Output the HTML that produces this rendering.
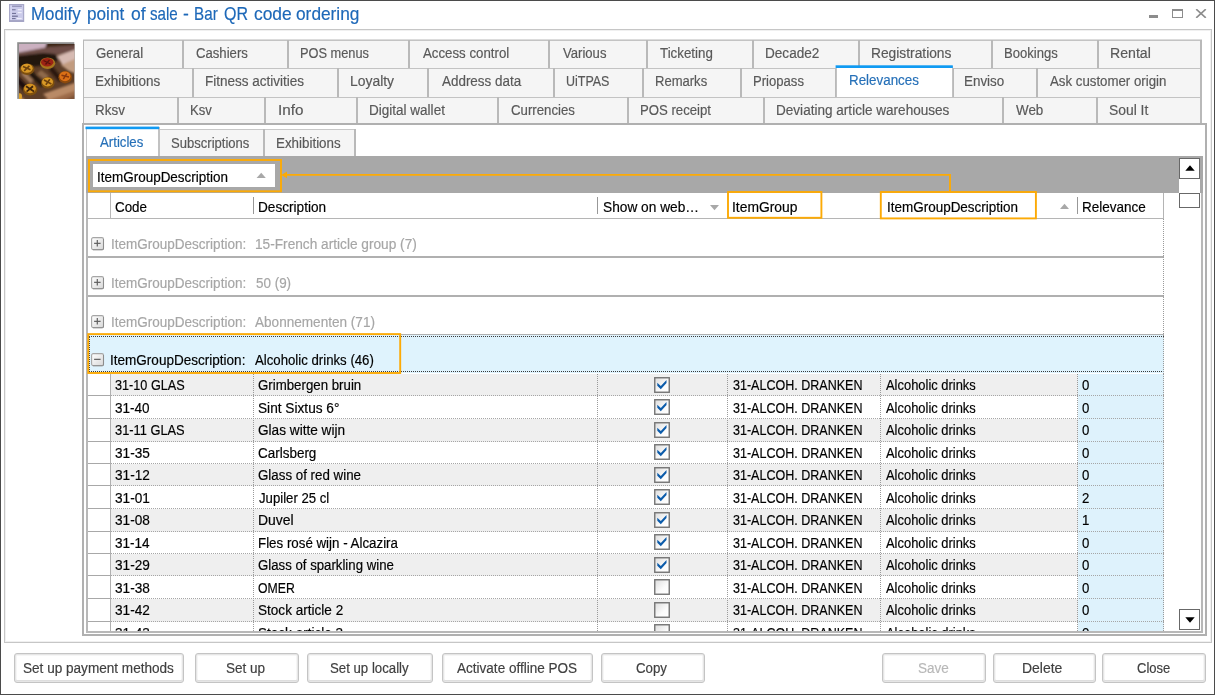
<!DOCTYPE html><html><head><meta charset="utf-8"><title>Modify point of sale - Bar QR code ordering</title><style>
html,body{margin:0;padding:0;background:#fff;}
body{width:1215px;height:695px;position:relative;overflow:hidden;font-family:"Liberation Sans", sans-serif;}
.b{position:absolute;box-sizing:border-box;}
.t{position:absolute;white-space:nowrap;font-family:"Liberation Sans", sans-serif;transform-origin:0 50%;-webkit-text-stroke:0.18px currentColor;}
.tab{background:#f3f3f3;border:1px solid #c6c6c6;}
.btn{background:#fff;border:1px solid #c4c4c4;border-radius:3px;box-shadow:inset 0 0 0 1px #e6e6e6, inset 0 -1px 0 1px #dedede, inset 0 0 0 2px #f6f6f6;}

</style></head><body>
<div class="b " style="left:0px;top:0px;width:1215px;height:695px;border:1px solid #4b4b4b;"></div>
<svg class="b" style="left:9px;top:4px" width="16" height="18" viewBox="0 0 16 18">
<rect x="0.6" y="0.6" width="14" height="16.8" fill="#cbcbea" stroke="#a9a9c9" stroke-width="1.2"/>
<rect x="1.4" y="1.4" width="1.4" height="15.2" fill="#d9d9f3"/>
<rect x="3" y="1.7" width="9.8" height="1.1" fill="#8c8cb0"/>
<rect x="3" y="5.2" width="3.6" height="1.1" fill="#74749a"/><rect x="8.7" y="5" width="4" height="1.3" fill="#eeeefa"/>
<rect x="8.7" y="8" width="4" height="1.2" fill="#eeeefa"/>
<rect x="3" y="8.9" width="4" height="1.1" fill="#74749a"/>
<rect x="3" y="11.6" width="5.8" height="1.2" fill="#6e6e94"/>
<rect x="3" y="14" width="3.6" height="1.1" fill="#74749a"/><rect x="7.7" y="13.9" width="5" height="1.3" fill="#eeeefa"/>
<rect x="0.6" y="16.2" width="14" height="1.2" fill="#a0a0c0"/>
</svg>
<div class="b" style="left:0;top:0;width:0;height:0;">
<span class="t" style="left:31.32px;top:2.29px;font-size:18.5px;line-height:24px;color:#1d68b8;transform:scaleX(0.9124);">Modify</span>
<span class="t" style="left:86.89px;top:2.29px;font-size:18.5px;line-height:24px;color:#1d68b8;transform:scaleX(0.9281);">point</span>
<span class="t" style="left:130.66px;top:2.29px;font-size:18.5px;line-height:24px;color:#1d68b8;transform:scaleX(0.9469);">of</span>
<span class="t" style="left:150.48px;top:2.29px;font-size:18.5px;line-height:24px;color:#1d68b8;transform:scaleX(0.8190);">sale</span>
<span class="t" style="left:183.02px;top:2.29px;font-size:18.5px;line-height:24px;color:#1d68b8;transform:scaleX(0.9446);">-</span>
<span class="t" style="left:194.45px;top:2.29px;font-size:18.5px;line-height:24px;color:#1d68b8;transform:scaleX(0.8233);">Bar</span>
<span class="t" style="left:223.94px;top:2.29px;font-size:18.5px;line-height:24px;color:#1d68b8;transform:scaleX(0.8649);">QR</span>
<span class="t" style="left:253.56px;top:2.29px;font-size:18.5px;line-height:24px;color:#1d68b8;transform:scaleX(0.9401);">code</span>
<span class="t" style="left:295.67px;top:2.29px;font-size:18.5px;line-height:24px;color:#1d68b8;transform:scaleX(0.9347);">ordering</span>
</div>
<div class="b " style="left:1149px;top:15px;width:9px;height:3px;background:#8c8c8c;"></div>
<div class="b " style="left:1172px;top:9px;width:11px;height:9px;border:1px solid #8c8c8c;border-top-width:2px;"></div>
<svg class="b" style="left:1195px;top:9px" width="12" height="9" viewBox="0 0 12 9"><path d="M1.2 0.2 L10.8 8.8 M10.8 0.2 L1.2 8.8" stroke="#8c8c8c" stroke-width="1.7" fill="none"/></svg>
<div class="b " style="left:4px;top:29px;width:1208px;height:614px;border:1px solid #c6c6c6;box-shadow:inset 0 0 0 1px #f0f0f0;"></div>
<svg class="b" style="left:17px;top:42px" width="58" height="57" viewBox="0 0 58 57">
<defs><filter id="bl" x="-10%" y="-10%" width="120%" height="120%"><feGaussianBlur stdDeviation="1.3"/></filter>
<filter id="bs" x="-20%" y="-20%" width="140%" height="140%"><feGaussianBlur stdDeviation="0.55"/></filter>
<clipPath id="ic"><rect x="2" y="2" width="55.3" height="54.9"/></clipPath></defs>
<rect x="0.2" y="0.2" width="57.1" height="56.7" fill="#8e8e8e"/>
<g clip-path="url(#ic)"><g transform="translate(2,2)">
<rect x="-2" y="-2" width="60" height="60" fill="#5e3e28"/>
<g filter="url(#bl)">
<path d="M-3 -3 L30 -3 L26 4 L-3 10 Z" fill="#cbb0c0"/>
<path d="M28 -3 L58 -3 L58 3 L26 6 Z" fill="#3c2618"/>
<path d="M-3 9 L30 3 L58 1 L58 7 L36 11 L-3 14 Z" fill="#6e4e46"/>
<path d="M-3 12 L24 9 L36 10 L40 16 L20 22 L-3 24 Z" fill="#20130a"/>
<path d="M38 12 L58 5 L58 16 L44 22 Z" fill="#d6bab2"/>
<path d="M42 21 L58 14 L58 30 L50 27 Z" fill="#c29c80"/>
<path d="M-3 30 L10 44 L6 48 L-3 38 Z" fill="#1c1009"/>
<path d="M13 27 L26 40 L22 43 L10 31 Z" fill="#23150b"/>
<path d="M33 22 L44 35 L40 38 L30 26 Z" fill="#2a190d"/>
<path d="M2 30 L12 40 L14 36 L6 28 Z" fill="#a27c5e"/>
<path d="M18 30 L26 36 L30 32 L22 26 Z" fill="#8f6a4c"/>
<path d="M20 58 L58 42 L58 58 Z" fill="#9c6a48"/>
<path d="M24 50 L58 38 L58 46 L30 56 Z" fill="#b98a66"/>
<path d="M-3 48 L8 58 L-3 58 Z" fill="#b88a5c"/>
<path d="M40 58 L58 50 L58 58 Z" fill="#7e5238"/>
</g>
<g filter="url(#bs)">
<ellipse cx="28.6" cy="19.2" rx="7.6" ry="5.8" fill="#a8761f"/><ellipse cx="28.2" cy="18.2" rx="6.2" ry="4.2" fill="#9c2412"/>
<ellipse cx="8.2" cy="25.2" rx="7.2" ry="5.8" fill="#7e5010"/><ellipse cx="7.8" cy="24.2" rx="5.8" ry="4.5" fill="#d89828"/>
<ellipse cx="46.2" cy="33.2" rx="6.8" ry="6.2" fill="#8a480c"/><ellipse cx="46" cy="32.3" rx="5.5" ry="4.9" fill="#dc7016"/>
<ellipse cx="28.8" cy="38.8" rx="6.8" ry="5.8" fill="#7e5010"/><ellipse cx="28.5" cy="37.9" rx="5.5" ry="4.5" fill="#da9a28"/>
<ellipse cx="11.2" cy="45.4" rx="7.2" ry="6" fill="#7e5010"/><ellipse cx="11" cy="44.5" rx="5.9" ry="4.7" fill="#d49222"/>
<ellipse cx="0.6" cy="52.4" rx="2.4" ry="3.2" fill="#dca02a"/>
<path d="M24.5 16.5 L31.5 20 M26.5 20.5 L30.5 15.8" stroke="#5a120a" stroke-width="1.3" fill="none"/>
<path d="M4 22.5 L11.5 25.8 M5.2 26.8 L10.4 21.8" stroke="#6e420c" stroke-width="1.6" fill="none"/>
<path d="M42.5 31.3 L50 33 M44.3 35.2 L47.8 29.6" stroke="#8a3808" stroke-width="1.5" fill="none"/>
<path d="M25 36 L32.4 40 M26.8 40.8 L30.8 35.2" stroke="#6e420c" stroke-width="1.6" fill="none"/>
<path d="M7 42.3 L15 47.6 M7.6 47.6 L14 42.2" stroke="#40260a" stroke-width="1.8" fill="none"/>
</g>
</g></g>
</svg>
<div class="b " style="left:83px;top:40px;width:1119px;height:84px;background:#f5f5f5;"></div>
<div class="b " style="left:83px;top:39px;width:1119px;height:1px;background:#dcdcdc;"></div>
<div class="b " style="left:83px;top:40px;width:1119px;height:1px;background:#c3c3c3;"></div>
<div class="b " style="left:83px;top:40px;width:1px;height:28px;background:#b9b9b9;"></div>
<div class="b " style="left:182px;top:40px;width:2px;height:28px;background:#b9b9b9;"></div>
<div class="b " style="left:287px;top:40px;width:2px;height:28px;background:#b9b9b9;"></div>
<div class="b " style="left:408px;top:40px;width:2px;height:28px;background:#b9b9b9;"></div>
<div class="b " style="left:548px;top:40px;width:2px;height:28px;background:#b9b9b9;"></div>
<div class="b " style="left:646px;top:40px;width:2px;height:28px;background:#b9b9b9;"></div>
<div class="b " style="left:752px;top:40px;width:2px;height:28px;background:#b9b9b9;"></div>
<div class="b " style="left:858px;top:40px;width:2px;height:28px;background:#b9b9b9;"></div>
<div class="b " style="left:991px;top:40px;width:2px;height:28px;background:#b9b9b9;"></div>
<div class="b " style="left:1097px;top:40px;width:2px;height:28px;background:#b9b9b9;"></div>
<div class="b " style="left:1200px;top:40px;width:2px;height:28px;background:#b9b9b9;"></div>
<span class="t" style="left:95.53px;top:44.75px;font-size:14px;line-height:16px;color:#595959;transform:scaleX(0.9467);">General</span>
<span class="t" style="left:195.73px;top:44.75px;font-size:14px;line-height:16px;color:#595959;transform:scaleX(0.9385);">Cashiers</span>
<span class="t" style="left:299.65px;top:44.75px;font-size:14px;line-height:16px;color:#595959;transform:scaleX(0.9144);">POS menus</span>
<span class="t" style="left:422.97px;top:44.75px;font-size:14px;line-height:16px;color:#595959;transform:scaleX(0.9470);">Access control</span>
<span class="t" style="left:562.64px;top:44.75px;font-size:14px;line-height:16px;color:#595959;transform:scaleX(0.9354);">Various</span>
<span class="t" style="left:660.30px;top:44.75px;font-size:14px;line-height:16px;color:#595959;transform:scaleX(0.9524);">Ticketing</span>
<span class="t" style="left:765.29px;top:44.75px;font-size:14px;line-height:16px;color:#595959;transform:scaleX(0.9707);">Decade2</span>
<span class="t" style="left:871.27px;top:44.75px;font-size:14px;line-height:16px;color:#595959;transform:scaleX(0.9844);">Registrations</span>
<span class="t" style="left:1003.73px;top:44.75px;font-size:14px;line-height:16px;color:#595959;transform:scaleX(0.9350);">Bookings</span>
<span class="t" style="left:1109.84px;top:44.75px;font-size:14px;line-height:16px;color:#595959;transform:scaleX(1.0082);">Rental</span>
<div class="b " style="left:83px;top:68px;width:1119px;height:1px;background:#c3c3c3;"></div>
<div class="b " style="left:83px;top:68px;width:1px;height:29px;background:#b9b9b9;"></div>
<div class="b " style="left:192px;top:68px;width:2px;height:29px;background:#b9b9b9;"></div>
<div class="b " style="left:337px;top:68px;width:2px;height:29px;background:#b9b9b9;"></div>
<div class="b " style="left:427px;top:68px;width:2px;height:29px;background:#b9b9b9;"></div>
<div class="b " style="left:553px;top:68px;width:2px;height:29px;background:#b9b9b9;"></div>
<div class="b " style="left:642px;top:68px;width:2px;height:29px;background:#b9b9b9;"></div>
<div class="b " style="left:740px;top:68px;width:2px;height:29px;background:#b9b9b9;"></div>
<div class="b " style="left:835px;top:68px;width:2px;height:29px;background:#b9b9b9;"></div>
<div class="b " style="left:952px;top:68px;width:2px;height:29px;background:#b9b9b9;"></div>
<div class="b " style="left:1036px;top:68px;width:2px;height:29px;background:#b9b9b9;"></div>
<div class="b " style="left:1200px;top:68px;width:2px;height:29px;background:#b9b9b9;"></div>
<span class="t" style="left:95.09px;top:73.45px;font-size:14px;line-height:16px;color:#595959;transform:scaleX(0.9629);">Exhibitions</span>
<span class="t" style="left:205.29px;top:73.45px;font-size:14px;line-height:16px;color:#595959;transform:scaleX(0.9649);">Fitness activities</span>
<span class="t" style="left:350.06px;top:73.45px;font-size:14px;line-height:16px;color:#595959;transform:scaleX(0.9935);">Loyalty</span>
<span class="t" style="left:441.67px;top:73.45px;font-size:14px;line-height:16px;color:#595959;transform:scaleX(0.9592);">Address data</span>
<span class="t" style="left:566.44px;top:73.45px;font-size:14px;line-height:16px;color:#595959;transform:scaleX(0.8910);">UiTPAS</span>
<span class="t" style="left:655.13px;top:73.45px;font-size:14px;line-height:16px;color:#595959;transform:scaleX(0.9310);">Remarks</span>
<span class="t" style="left:752.83px;top:73.45px;font-size:14px;line-height:16px;color:#595959;transform:scaleX(0.9354);">Priopass</span>
<span class="t" style="left:963.80px;top:73.45px;font-size:14px;line-height:16px;color:#595959;transform:scaleX(0.9582);">Enviso</span>
<span class="t" style="left:1050.37px;top:73.45px;font-size:14px;line-height:16px;color:#595959;transform:scaleX(0.9468);">Ask customer origin</span>
<div class="b " style="left:83px;top:97px;width:1119px;height:1px;background:#c3c3c3;"></div>
<div class="b " style="left:83px;top:97px;width:1px;height:27px;background:#b9b9b9;"></div>
<div class="b " style="left:177px;top:97px;width:2px;height:27px;background:#b9b9b9;"></div>
<div class="b " style="left:264px;top:97px;width:2px;height:27px;background:#b9b9b9;"></div>
<div class="b " style="left:356px;top:97px;width:2px;height:27px;background:#b9b9b9;"></div>
<div class="b " style="left:497px;top:97px;width:2px;height:27px;background:#b9b9b9;"></div>
<div class="b " style="left:627px;top:97px;width:2px;height:27px;background:#b9b9b9;"></div>
<div class="b " style="left:763px;top:97px;width:2px;height:27px;background:#b9b9b9;"></div>
<div class="b " style="left:1002px;top:97px;width:2px;height:27px;background:#b9b9b9;"></div>
<div class="b " style="left:1096px;top:97px;width:2px;height:27px;background:#b9b9b9;"></div>
<div class="b " style="left:1200px;top:97px;width:2px;height:27px;background:#b9b9b9;"></div>
<span class="t" style="left:95.10px;top:102.15px;font-size:14px;line-height:16px;color:#595959;transform:scaleX(0.9594);">Rksv</span>
<span class="t" style="left:190.43px;top:102.15px;font-size:14px;line-height:16px;color:#595959;transform:scaleX(0.9349);">Ksv</span>
<span class="t" style="left:277.59px;top:102.15px;font-size:14px;line-height:16px;color:#595959;transform:scaleX(1.0898);">Info</span>
<span class="t" style="left:368.89px;top:102.15px;font-size:14px;line-height:16px;color:#595959;transform:scaleX(0.9659);">Digital wallet</span>
<span class="t" style="left:510.93px;top:102.15px;font-size:14px;line-height:16px;color:#595959;transform:scaleX(0.9447);">Currencies</span>
<span class="t" style="left:640.12px;top:102.15px;font-size:14px;line-height:16px;color:#595959;transform:scaleX(0.9404);">POS receipt</span>
<span class="t" style="left:776.49px;top:102.15px;font-size:14px;line-height:16px;color:#595959;transform:scaleX(0.9688);">Deviating article warehouses</span>
<span class="t" style="left:1016.14px;top:102.15px;font-size:14px;line-height:16px;color:#595959;transform:scaleX(0.9575);">Web</span>
<span class="t" style="left:1109.17px;top:102.15px;font-size:14px;line-height:16px;color:#595959;transform:scaleX(0.9910);">Soul It</span>
<div class="b " style="left:836px;top:66px;width:117px;height:31px;background:#fff;border-left:1px solid #c2c2c2;border-right:1px solid #c2c2c2;"></div>
<svg class="b" style="left:830px;top:60px" width="130" height="12" viewBox="0 0 130 12"><rect x="5.6" y="5.3" width="117.2" height="2.7" fill="#109af2"/></svg>
<span class="t" style="left:848.80px;top:72.45px;font-size:14px;line-height:16px;color:#2670b8;transform:scaleX(0.9553);">Relevances</span>
<div class="b " style="left:82px;top:123px;width:1125px;height:513px;border:2px solid #b0b0b0;background:#fff;"></div>
<div class="b " style="left:159px;top:129px;width:197px;height:28px;background:#f5f5f5;border-top:1px solid #c8c8c8;"></div>
<div class="b " style="left:263px;top:129px;width:2px;height:28px;background:#b9b9b9;"></div>
<div class="b " style="left:354px;top:129px;width:2px;height:28px;background:#b9b9b9;"></div>
<span class="t" style="left:171.21px;top:134.65px;font-size:14px;line-height:16px;color:#595959;transform:scaleX(0.9325);">Subscriptions</span>
<span class="t" style="left:276.40px;top:134.65px;font-size:14px;line-height:16px;color:#595959;transform:scaleX(0.9554);">Exhibitions</span>
<div class="b " style="left:86px;top:127px;width:74px;height:30px;background:#fff;border-left:1px solid #c8c8c8;border-right:2px solid #c2c2c2;"></div>
<svg class="b" style="left:80px;top:120px" width="90" height="12" viewBox="0 0 90 12"><rect x="5.5" y="6.6" width="73.6" height="2.6" fill="#109af2"/></svg>
<span class="t" style="left:100.27px;top:133.95px;font-size:14px;line-height:16px;color:#2670b8;transform:scaleX(0.9435);">Articles</span>
<div class="b " style="left:86px;top:156px;width:1117px;height:477px;border:2px solid #b8b8b8;border-top:none;"></div>
<div class="b " style="left:86px;top:156px;width:1117px;height:36.5px;background:#a8a8a8;"></div>
<div class="b " style="left:92.5px;top:164px;width:182px;height:23px;background:#fff;"></div>
<span class="t" style="left:97.46px;top:168.75px;font-size:14px;line-height:16px;color:#000;transform:scaleX(0.9622);">ItemGroupDescription</span>
<svg class="b" style="left:256px;top:172px" width="11" height="7" viewBox="0 0 11 7"><path d="M0.6 5.9 L5.2 0.7 L9.8 5.9 Z" fill="#a8a8a8"/></svg>
<div class="b " style="left:88px;top:192.5px;width:1076px;height:26px;background:#fff;"></div>
<div class="b " style="left:88px;top:218px;width:1076px;height:1px;background:#b5b5b5;"></div>
<div class="b " style="left:110px;top:192.5px;width:1px;height:26px;background:#b8b8b8;"></div>
<div class="b " style="left:253px;top:197px;width:1px;height:17px;background:#989898;"></div>
<div class="b " style="left:597px;top:197px;width:1px;height:17px;background:#989898;"></div>
<div class="b " style="left:1077px;top:197px;width:1px;height:17px;background:#989898;"></div>
<span class="t" style="left:115.42px;top:198.75px;font-size:14px;line-height:16px;color:#000;transform:scaleX(0.9553);">Code</span>
<span class="t" style="left:258.38px;top:198.75px;font-size:14px;line-height:16px;color:#000;transform:scaleX(0.9725);">Description</span>
<span class="t" style="left:603.08px;top:198.75px;font-size:14px;line-height:16px;color:#000;transform:scaleX(0.9789);">Show on web…</span>
<span class="t" style="left:732.12px;top:198.75px;font-size:14px;line-height:16px;color:#000;transform:scaleX(0.9898);">ItemGroup</span>
<span class="t" style="left:886.66px;top:198.75px;font-size:14px;line-height:16px;color:#000;transform:scaleX(0.9622);">ItemGroupDescription</span>
<span class="t" style="left:1082.49px;top:198.75px;font-size:14px;line-height:16px;color:#000;transform:scaleX(0.9646);">Relevance</span>
<svg class="b" style="left:709px;top:204px" width="11" height="7" viewBox="0 0 11 7"><path d="M1 1 L10 1 L5.5 6.2 Z" fill="#a8a8a8"/></svg>
<svg class="b" style="left:1059px;top:203px" width="11" height="7" viewBox="0 0 11 7"><path d="M1 6 L5.5 0.8 L10 6 Z" fill="#a8a8a8"/></svg>
<svg width="0" height="0" style="position:absolute"><defs><linearGradient id="pg" x1="0" y1="0" x2="1" y2="1"><stop offset="0" stop-color="#ffffff"/><stop offset="1" stop-color="#d8d8d8"/></linearGradient></defs></svg>
<div class="b " style="left:88px;top:256px;width:1076px;height:2px;background:#b0b0b0;"></div>
<svg class="b" style="left:91px;top:237.1px" width="14" height="14" viewBox="0 0 14 14"><rect x="0.6" y="0.6" width="11.9" height="12.1" rx="1.6" fill="url(#pg)" stroke="#a6a6a6" stroke-width="1.1"/><path d="M12.5 2 V12 Q12.5 12.7 11.8 12.7 H2" fill="none" stroke="#8c8c8c" stroke-width="1"/><path d="M3.1 6.35 H9.6" stroke="#606060" stroke-width="1.2"/><path d="M6.3 3.1 V9.6" stroke="#606060" stroke-width="1.2"/></svg>
<span class="t" style="left:110.65px;top:236.15px;font-size:14px;line-height:16px;color:#a6a6a6;transform:scaleX(0.9652);">ItemGroupDescription:</span>
<span class="t" style="left:254.76px;top:236.15px;font-size:14px;line-height:16px;color:#a6a6a6;transform:scaleX(0.9762);">15-French article group (7)</span>
<div class="b " style="left:88px;top:295px;width:1076px;height:2px;background:#b0b0b0;"></div>
<svg class="b" style="left:91px;top:275.8px" width="14" height="14" viewBox="0 0 14 14"><rect x="0.6" y="0.6" width="11.9" height="12.1" rx="1.6" fill="url(#pg)" stroke="#a6a6a6" stroke-width="1.1"/><path d="M12.5 2 V12 Q12.5 12.7 11.8 12.7 H2" fill="none" stroke="#8c8c8c" stroke-width="1"/><path d="M3.1 6.35 H9.6" stroke="#606060" stroke-width="1.2"/><path d="M6.3 3.1 V9.6" stroke="#606060" stroke-width="1.2"/></svg>
<span class="t" style="left:110.65px;top:274.85px;font-size:14px;line-height:16px;color:#a6a6a6;transform:scaleX(0.9652);">ItemGroupDescription:</span>
<span class="t" style="left:256.36px;top:274.85px;font-size:14px;line-height:16px;color:#a6a6a6;transform:scaleX(0.9589);">50 (9)</span>
<div class="b " style="left:88px;top:334px;width:1076px;height:2px;background:#b0b0b0;"></div>
<svg class="b" style="left:91px;top:314.5px" width="14" height="14" viewBox="0 0 14 14"><rect x="0.6" y="0.6" width="11.9" height="12.1" rx="1.6" fill="url(#pg)" stroke="#a6a6a6" stroke-width="1.1"/><path d="M12.5 2 V12 Q12.5 12.7 11.8 12.7 H2" fill="none" stroke="#8c8c8c" stroke-width="1"/><path d="M3.1 6.35 H9.6" stroke="#606060" stroke-width="1.2"/><path d="M6.3 3.1 V9.6" stroke="#606060" stroke-width="1.2"/></svg>
<span class="t" style="left:110.65px;top:313.55px;font-size:14px;line-height:16px;color:#a6a6a6;transform:scaleX(0.9652);">ItemGroupDescription:</span>
<span class="t" style="left:255.17px;top:313.55px;font-size:14px;line-height:16px;color:#a6a6a6;transform:scaleX(0.9694);">Abonnementen (71)</span>
<div class="b " style="left:88px;top:335px;width:1076px;height:38px;background:#dff3fd;"></div>
<div class="b " style="left:89px;top:336px;width:1075px;height:36px;border:1px dotted #3a3a3a;"></div>
<svg class="b" style="left:91px;top:353.3px" width="14" height="14" viewBox="0 0 14 14"><rect x="0.6" y="0.6" width="11.9" height="12.1" rx="1.6" fill="url(#pg)" stroke="#a6a6a6" stroke-width="1.1"/><path d="M12.5 2 V12 Q12.5 12.7 11.8 12.7 H2" fill="none" stroke="#8c8c8c" stroke-width="1"/><path d="M3.1 6.35 H9.6" stroke="#606060" stroke-width="1.2"/></svg>
<span class="t" style="left:110.45px;top:352.35px;font-size:14px;line-height:16px;color:#000;transform:scaleX(0.9667);">ItemGroupDescription:</span>
<span class="t" style="left:254.97px;top:352.35px;font-size:14px;line-height:16px;color:#000;transform:scaleX(0.9429);">Alcoholic drinks (46)</span>
<div class="b" style="left:88px;top:374px;width:1113px;height:257px;overflow:hidden;">
<svg width="0" height="0" style="position:absolute"><defs><linearGradient id="cg" x1="0" y1="0" x2="1" y2="1"><stop offset="0" stop-color="#dcdcdc"/><stop offset="0.6" stop-color="#fbfbfb"/><stop offset="1" stop-color="#fff"/></linearGradient></defs></svg>
<div class="b " style="left:22px;top:0px;width:968px;height:22px;background:#efefef;"></div>
<div class="b " style="left:990px;top:0px;width:86px;height:22px;background:#def2fc;"></div>
<div class="b " style="left:0px;top:21px;width:22px;height:1px;background:#a8a8a8;"></div>
<div class="b " style="left:22px;top:21px;width:1054px;height:1px;border-top:1px dotted #a6a6a6;"></div>
<span class="t" style="left:27.12px;top:3.05px;font-size:14px;line-height:16px;color:#000;transform:scaleX(0.9042);">31-10 GLAS</span>
<span class="t" style="left:170.13px;top:3.05px;font-size:14px;line-height:16px;color:#000;transform:scaleX(0.9476);">Grimbergen bruin</span>
<svg class="b" style="left:566.3px;top:3px" width="16" height="16" viewBox="0 0 16 16"><rect x="0.75" y="0.75" width="14.5" height="14.5" fill="url(#cg)" stroke="#747474" stroke-width="1.4"/><path d="M3.3 5.7 L3.3 8.8 L6.8 12.3 L12.5 5.9 L12.5 2.9 L6.8 9.0 Z" fill="#0c5cab"/></svg>
<span class="t" style="left:645.22px;top:3.05px;font-size:14px;line-height:16px;color:#000;transform:scaleX(0.8949);">31-ALCOH. DRANKEN</span>
<span class="t" style="left:798.47px;top:3.05px;font-size:14px;line-height:16px;color:#000;transform:scaleX(0.9232);">Alcoholic drinks</span>
<span class="t" style="left:994.48px;top:3.05px;font-size:14px;line-height:16px;color:#000;transform:scaleX(0.9446);">0</span>
<div class="b " style="left:22px;top:22px;width:968px;height:23px;background:#fff;"></div>
<div class="b " style="left:990px;top:22px;width:86px;height:23px;background:#def2fc;"></div>
<div class="b " style="left:0px;top:44px;width:22px;height:1px;background:#a8a8a8;"></div>
<div class="b " style="left:22px;top:44px;width:1054px;height:1px;border-top:1px dotted #a6a6a6;"></div>
<span class="t" style="left:27.09px;top:25.55px;font-size:14px;line-height:16px;color:#000;transform:scaleX(0.9647);">31-40</span>
<span class="t" style="left:170.18px;top:25.55px;font-size:14px;line-height:16px;color:#000;transform:scaleX(0.9764);">Sint Sixtus 6°</span>
<svg class="b" style="left:566.3px;top:25px" width="16" height="16" viewBox="0 0 16 16"><rect x="0.75" y="0.75" width="14.5" height="14.5" fill="url(#cg)" stroke="#747474" stroke-width="1.4"/><path d="M3.3 5.7 L3.3 8.8 L6.8 12.3 L12.5 5.9 L12.5 2.9 L6.8 9.0 Z" fill="#0c5cab"/></svg>
<span class="t" style="left:645.22px;top:25.55px;font-size:14px;line-height:16px;color:#000;transform:scaleX(0.8949);">31-ALCOH. DRANKEN</span>
<span class="t" style="left:798.47px;top:25.55px;font-size:14px;line-height:16px;color:#000;transform:scaleX(0.9232);">Alcoholic drinks</span>
<span class="t" style="left:994.48px;top:25.55px;font-size:14px;line-height:16px;color:#000;transform:scaleX(0.9446);">0</span>
<div class="b " style="left:22px;top:45px;width:968px;height:23px;background:#efefef;"></div>
<div class="b " style="left:990px;top:45px;width:86px;height:23px;background:#def2fc;"></div>
<div class="b " style="left:0px;top:67px;width:22px;height:1px;background:#a8a8a8;"></div>
<div class="b " style="left:22px;top:67px;width:1054px;height:1px;border-top:1px dotted #a6a6a6;"></div>
<span class="t" style="left:27.11px;top:48.05px;font-size:14px;line-height:16px;color:#000;transform:scaleX(0.9167);">31-11 GLAS</span>
<span class="t" style="left:170.11px;top:48.05px;font-size:14px;line-height:16px;color:#000;transform:scaleX(0.9732);">Glas witte wijn</span>
<svg class="b" style="left:566.3px;top:48px" width="16" height="16" viewBox="0 0 16 16"><rect x="0.75" y="0.75" width="14.5" height="14.5" fill="url(#cg)" stroke="#747474" stroke-width="1.4"/><path d="M3.3 5.7 L3.3 8.8 L6.8 12.3 L12.5 5.9 L12.5 2.9 L6.8 9.0 Z" fill="#0c5cab"/></svg>
<span class="t" style="left:645.22px;top:48.05px;font-size:14px;line-height:16px;color:#000;transform:scaleX(0.8949);">31-ALCOH. DRANKEN</span>
<span class="t" style="left:798.47px;top:48.05px;font-size:14px;line-height:16px;color:#000;transform:scaleX(0.9232);">Alcoholic drinks</span>
<span class="t" style="left:994.48px;top:48.05px;font-size:14px;line-height:16px;color:#000;transform:scaleX(0.9446);">0</span>
<div class="b " style="left:22px;top:68px;width:968px;height:22px;background:#fff;"></div>
<div class="b " style="left:990px;top:68px;width:86px;height:22px;background:#def2fc;"></div>
<div class="b " style="left:0px;top:89px;width:22px;height:1px;background:#a8a8a8;"></div>
<div class="b " style="left:22px;top:89px;width:1054px;height:1px;border-top:1px dotted #a6a6a6;"></div>
<span class="t" style="left:27.08px;top:70.55px;font-size:14px;line-height:16px;color:#000;transform:scaleX(0.9716);">31-35</span>
<span class="t" style="left:170.12px;top:70.55px;font-size:14px;line-height:16px;color:#000;transform:scaleX(0.9615);">Carlsberg</span>
<svg class="b" style="left:566.3px;top:70px" width="16" height="16" viewBox="0 0 16 16"><rect x="0.75" y="0.75" width="14.5" height="14.5" fill="url(#cg)" stroke="#747474" stroke-width="1.4"/><path d="M3.3 5.7 L3.3 8.8 L6.8 12.3 L12.5 5.9 L12.5 2.9 L6.8 9.0 Z" fill="#0c5cab"/></svg>
<span class="t" style="left:645.22px;top:70.55px;font-size:14px;line-height:16px;color:#000;transform:scaleX(0.8949);">31-ALCOH. DRANKEN</span>
<span class="t" style="left:798.47px;top:70.55px;font-size:14px;line-height:16px;color:#000;transform:scaleX(0.9232);">Alcoholic drinks</span>
<span class="t" style="left:994.48px;top:70.55px;font-size:14px;line-height:16px;color:#000;transform:scaleX(0.9446);">0</span>
<div class="b " style="left:22px;top:90px;width:968px;height:22px;background:#efefef;"></div>
<div class="b " style="left:990px;top:90px;width:86px;height:22px;background:#def2fc;"></div>
<div class="b " style="left:0px;top:111px;width:22px;height:1px;background:#a8a8a8;"></div>
<div class="b " style="left:22px;top:111px;width:1054px;height:1px;border-top:1px dotted #a6a6a6;"></div>
<span class="t" style="left:27.08px;top:93.05px;font-size:14px;line-height:16px;color:#000;transform:scaleX(0.9749);">31-12</span>
<span class="t" style="left:170.13px;top:93.05px;font-size:14px;line-height:16px;color:#000;transform:scaleX(0.9520);">Glass of red wine</span>
<svg class="b" style="left:566.3px;top:93px" width="16" height="16" viewBox="0 0 16 16"><rect x="0.75" y="0.75" width="14.5" height="14.5" fill="url(#cg)" stroke="#747474" stroke-width="1.4"/><path d="M3.3 5.7 L3.3 8.8 L6.8 12.3 L12.5 5.9 L12.5 2.9 L6.8 9.0 Z" fill="#0c5cab"/></svg>
<span class="t" style="left:645.22px;top:93.05px;font-size:14px;line-height:16px;color:#000;transform:scaleX(0.8949);">31-ALCOH. DRANKEN</span>
<span class="t" style="left:798.47px;top:93.05px;font-size:14px;line-height:16px;color:#000;transform:scaleX(0.9232);">Alcoholic drinks</span>
<span class="t" style="left:994.48px;top:93.05px;font-size:14px;line-height:16px;color:#000;transform:scaleX(0.9446);">0</span>
<div class="b " style="left:22px;top:112px;width:968px;height:23px;background:#fff;"></div>
<div class="b " style="left:990px;top:112px;width:86px;height:23px;background:#def2fc;"></div>
<div class="b " style="left:0px;top:134px;width:22px;height:1px;background:#a8a8a8;"></div>
<div class="b " style="left:22px;top:134px;width:1054px;height:1px;border-top:1px dotted #a6a6a6;"></div>
<span class="t" style="left:27.08px;top:115.55px;font-size:14px;line-height:16px;color:#000;transform:scaleX(0.9743);">31-01</span>
<span class="t" style="left:170.59px;top:115.55px;font-size:14px;line-height:16px;color:#000;transform:scaleX(0.9409);">Jupiler 25 cl</span>
<svg class="b" style="left:566.3px;top:115px" width="16" height="16" viewBox="0 0 16 16"><rect x="0.75" y="0.75" width="14.5" height="14.5" fill="url(#cg)" stroke="#747474" stroke-width="1.4"/><path d="M3.3 5.7 L3.3 8.8 L6.8 12.3 L12.5 5.9 L12.5 2.9 L6.8 9.0 Z" fill="#0c5cab"/></svg>
<span class="t" style="left:645.22px;top:115.55px;font-size:14px;line-height:16px;color:#000;transform:scaleX(0.8949);">31-ALCOH. DRANKEN</span>
<span class="t" style="left:798.47px;top:115.55px;font-size:14px;line-height:16px;color:#000;transform:scaleX(0.9232);">Alcoholic drinks</span>
<span class="t" style="left:994.33px;top:115.55px;font-size:14px;line-height:16px;color:#000;transform:scaleX(0.9446);">2</span>
<div class="b " style="left:22px;top:135px;width:968px;height:23px;background:#efefef;"></div>
<div class="b " style="left:990px;top:135px;width:86px;height:23px;background:#def2fc;"></div>
<div class="b " style="left:0px;top:157px;width:22px;height:1px;background:#a8a8a8;"></div>
<div class="b " style="left:22px;top:157px;width:1054px;height:1px;border-top:1px dotted #a6a6a6;"></div>
<span class="t" style="left:27.08px;top:138.05px;font-size:14px;line-height:16px;color:#000;transform:scaleX(0.9722);">31-08</span>
<span class="t" style="left:169.66px;top:138.05px;font-size:14px;line-height:16px;color:#000;transform:scaleX(0.9968);">Duvel</span>
<svg class="b" style="left:566.3px;top:138px" width="16" height="16" viewBox="0 0 16 16"><rect x="0.75" y="0.75" width="14.5" height="14.5" fill="url(#cg)" stroke="#747474" stroke-width="1.4"/><path d="M3.3 5.7 L3.3 8.8 L6.8 12.3 L12.5 5.9 L12.5 2.9 L6.8 9.0 Z" fill="#0c5cab"/></svg>
<span class="t" style="left:645.22px;top:138.05px;font-size:14px;line-height:16px;color:#000;transform:scaleX(0.8949);">31-ALCOH. DRANKEN</span>
<span class="t" style="left:798.47px;top:138.05px;font-size:14px;line-height:16px;color:#000;transform:scaleX(0.9232);">Alcoholic drinks</span>
<span class="t" style="left:993.99px;top:138.05px;font-size:14px;line-height:16px;color:#000;transform:scaleX(0.9446);">1</span>
<div class="b " style="left:22px;top:158px;width:968px;height:22px;background:#fff;"></div>
<div class="b " style="left:990px;top:158px;width:86px;height:22px;background:#def2fc;"></div>
<div class="b " style="left:0px;top:179px;width:22px;height:1px;background:#a8a8a8;"></div>
<div class="b " style="left:22px;top:179px;width:1054px;height:1px;border-top:1px dotted #a6a6a6;"></div>
<span class="t" style="left:27.08px;top:160.55px;font-size:14px;line-height:16px;color:#000;transform:scaleX(0.9666);">31-14</span>
<span class="t" style="left:169.71px;top:160.55px;font-size:14px;line-height:16px;color:#000;transform:scaleX(0.9518);">Fles rosé wijn - Alcazira</span>
<svg class="b" style="left:566.3px;top:160px" width="16" height="16" viewBox="0 0 16 16"><rect x="0.75" y="0.75" width="14.5" height="14.5" fill="url(#cg)" stroke="#747474" stroke-width="1.4"/><path d="M3.3 5.7 L3.3 8.8 L6.8 12.3 L12.5 5.9 L12.5 2.9 L6.8 9.0 Z" fill="#0c5cab"/></svg>
<span class="t" style="left:645.22px;top:160.55px;font-size:14px;line-height:16px;color:#000;transform:scaleX(0.8949);">31-ALCOH. DRANKEN</span>
<span class="t" style="left:798.47px;top:160.55px;font-size:14px;line-height:16px;color:#000;transform:scaleX(0.9232);">Alcoholic drinks</span>
<span class="t" style="left:994.48px;top:160.55px;font-size:14px;line-height:16px;color:#000;transform:scaleX(0.9446);">0</span>
<div class="b " style="left:22px;top:180px;width:968px;height:22px;background:#efefef;"></div>
<div class="b " style="left:990px;top:180px;width:86px;height:22px;background:#def2fc;"></div>
<div class="b " style="left:0px;top:201px;width:22px;height:1px;background:#a8a8a8;"></div>
<div class="b " style="left:22px;top:201px;width:1054px;height:1px;border-top:1px dotted #a6a6a6;"></div>
<span class="t" style="left:27.08px;top:183.05px;font-size:14px;line-height:16px;color:#000;transform:scaleX(0.9737);">31-29</span>
<span class="t" style="left:170.14px;top:183.05px;font-size:14px;line-height:16px;color:#000;transform:scaleX(0.9437);">Glass of sparkling wine</span>
<svg class="b" style="left:566.3px;top:183px" width="16" height="16" viewBox="0 0 16 16"><rect x="0.75" y="0.75" width="14.5" height="14.5" fill="url(#cg)" stroke="#747474" stroke-width="1.4"/><path d="M3.3 5.7 L3.3 8.8 L6.8 12.3 L12.5 5.9 L12.5 2.9 L6.8 9.0 Z" fill="#0c5cab"/></svg>
<span class="t" style="left:645.22px;top:183.05px;font-size:14px;line-height:16px;color:#000;transform:scaleX(0.8949);">31-ALCOH. DRANKEN</span>
<span class="t" style="left:798.47px;top:183.05px;font-size:14px;line-height:16px;color:#000;transform:scaleX(0.9232);">Alcoholic drinks</span>
<span class="t" style="left:994.48px;top:183.05px;font-size:14px;line-height:16px;color:#000;transform:scaleX(0.9446);">0</span>
<div class="b " style="left:22px;top:202px;width:968px;height:23px;background:#fff;"></div>
<div class="b " style="left:990px;top:202px;width:86px;height:23px;background:#def2fc;"></div>
<div class="b " style="left:0px;top:224px;width:22px;height:1px;background:#a8a8a8;"></div>
<div class="b " style="left:22px;top:224px;width:1054px;height:1px;border-top:1px dotted #a6a6a6;"></div>
<span class="t" style="left:27.08px;top:205.55px;font-size:14px;line-height:16px;color:#000;transform:scaleX(0.9722);">31-38</span>
<span class="t" style="left:170.22px;top:205.55px;font-size:14px;line-height:16px;color:#000;transform:scaleX(0.8750);">OMER</span>
<svg class="b" style="left:566.3px;top:205px" width="16" height="16" viewBox="0 0 16 16"><rect x="0.75" y="0.75" width="14.5" height="14.5" fill="url(#cg)" stroke="#747474" stroke-width="1.4"/></svg>
<span class="t" style="left:645.22px;top:205.55px;font-size:14px;line-height:16px;color:#000;transform:scaleX(0.8949);">31-ALCOH. DRANKEN</span>
<span class="t" style="left:798.47px;top:205.55px;font-size:14px;line-height:16px;color:#000;transform:scaleX(0.9232);">Alcoholic drinks</span>
<span class="t" style="left:994.48px;top:205.55px;font-size:14px;line-height:16px;color:#000;transform:scaleX(0.9446);">0</span>
<div class="b " style="left:22px;top:225px;width:968px;height:23px;background:#efefef;"></div>
<div class="b " style="left:990px;top:225px;width:86px;height:23px;background:#def2fc;"></div>
<div class="b " style="left:0px;top:247px;width:22px;height:1px;background:#a8a8a8;"></div>
<div class="b " style="left:22px;top:247px;width:1054px;height:1px;border-top:1px dotted #a6a6a6;"></div>
<span class="t" style="left:27.08px;top:228.05px;font-size:14px;line-height:16px;color:#000;transform:scaleX(0.9749);">31-42</span>
<span class="t" style="left:170.18px;top:228.05px;font-size:14px;line-height:16px;color:#000;transform:scaleX(0.9690);">Stock article 2</span>
<svg class="b" style="left:566.3px;top:228px" width="16" height="16" viewBox="0 0 16 16"><rect x="0.75" y="0.75" width="14.5" height="14.5" fill="url(#cg)" stroke="#747474" stroke-width="1.4"/></svg>
<span class="t" style="left:645.22px;top:228.05px;font-size:14px;line-height:16px;color:#000;transform:scaleX(0.8949);">31-ALCOH. DRANKEN</span>
<span class="t" style="left:798.47px;top:228.05px;font-size:14px;line-height:16px;color:#000;transform:scaleX(0.9232);">Alcoholic drinks</span>
<span class="t" style="left:994.48px;top:228.05px;font-size:14px;line-height:16px;color:#000;transform:scaleX(0.9446);">0</span>
<div class="b " style="left:22px;top:248px;width:968px;height:22px;background:#fff;"></div>
<div class="b " style="left:990px;top:248px;width:86px;height:22px;background:#def2fc;"></div>
<div class="b " style="left:0px;top:269px;width:22px;height:1px;background:#a8a8a8;"></div>
<div class="b " style="left:22px;top:269px;width:1054px;height:1px;border-top:1px dotted #a6a6a6;"></div>
<span class="t" style="left:27.08px;top:250.55px;font-size:14px;line-height:16px;color:#000;transform:scaleX(0.9724);">31-43</span>
<span class="t" style="left:170.18px;top:250.55px;font-size:14px;line-height:16px;color:#000;transform:scaleX(0.9680);">Stock article 3</span>
<svg class="b" style="left:566.3px;top:250px" width="16" height="16" viewBox="0 0 16 16"><rect x="0.75" y="0.75" width="14.5" height="14.5" fill="url(#cg)" stroke="#747474" stroke-width="1.4"/></svg>
<span class="t" style="left:645.22px;top:250.55px;font-size:14px;line-height:16px;color:#000;transform:scaleX(0.8949);">31-ALCOH. DRANKEN</span>
<span class="t" style="left:798.47px;top:250.55px;font-size:14px;line-height:16px;color:#000;transform:scaleX(0.9232);">Alcoholic drinks</span>
<span class="t" style="left:994.48px;top:250.55px;font-size:14px;line-height:16px;color:#000;transform:scaleX(0.9446);">0</span>
<div class="b " style="left:22px;top:0px;width:1px;height:257px;background:#b0b0b0;"></div>
<div class="b " style="left:165px;top:0px;width:1px;height:257px;border-left:1px dotted #9a9a9a;"></div>
<div class="b " style="left:509px;top:0px;width:1px;height:257px;border-left:1px dotted #9a9a9a;"></div>
<div class="b " style="left:639px;top:0px;width:1px;height:257px;border-left:1px dotted #9a9a9a;"></div>
<div class="b " style="left:792px;top:0px;width:1px;height:257px;border-left:1px dotted #9a9a9a;"></div>
<div class="b " style="left:989px;top:0px;width:1px;height:257px;border-left:1px dotted #9a9a9a;"></div>
<div class="b " style="left:1075px;top:0px;width:1px;height:257px;border-left:1px dotted #9a9a9a;"></div>
</div>
<div class="b " style="left:1163px;top:219px;width:1px;height:155px;border-left:1px dotted #9a9a9a;"></div>
<svg class="b" style="left:0;top:0" width="1215" height="695" viewBox="0 0 1215 695" fill="none" stroke="#fcaa06" stroke-width="1.9">
<rect x="89" y="160" width="192" height="31.3"/>
<path d="M286 174.9 H950 V191"/>
<path d="M281.4 174.9 L287 171.6 L287 178.2 Z" fill="#fcaa06" stroke="none"/>
<rect x="728" y="192" width="93.4" height="25.8"/>
<rect x="880.8" y="192" width="155.1" height="26.4"/>
<rect x="88.2" y="334.1" width="312" height="38.9"/>
</svg>
<div class="b " style="left:1179px;top:158px;width:21px;height:472px;background:#fff;"></div>
<div class="b " style="left:1163px;top:192.5px;width:1px;height:26px;background:#b4b4b4;"></div>
<div class="b " style="left:1179px;top:158px;width:21px;height:21px;border:1px solid #686868;background:#fff;"></div>
<svg class="b" style="left:1185px;top:165px" width="10" height="6" viewBox="0 0 10 6"><path d="M0.3 5.7 L5 0.3 L9.7 5.7 Z" fill="#000"/></svg>
<div class="b " style="left:1179px;top:193px;width:21px;height:15px;border:1px solid #686868;background:#fff;"></div>
<div class="b " style="left:1179px;top:609px;width:21px;height:21px;border:1px solid #686868;background:#fff;"></div>
<svg class="b" style="left:1185px;top:617px" width="10" height="6" viewBox="0 0 10 6"><path d="M0.3 0.3 L5 5.7 L9.7 0.3 Z" fill="#000"/></svg>
<div class="b btn" style="left:14px;top:653px;width:170px;height:30px;"></div>
<span class="t" style="left:23.08px;top:659.85px;font-size:14px;line-height:16px;color:#404040;transform:scaleX(0.9695);">Set up payment methods</span>
<div class="b btn" style="left:195px;top:653px;width:104px;height:30px;"></div>
<span class="t" style="left:225.89px;top:659.85px;font-size:14px;line-height:16px;color:#404040;transform:scaleX(0.9656);">Set up</span>
<div class="b btn" style="left:307px;top:653px;width:126px;height:30px;"></div>
<span class="t" style="left:329.60px;top:659.85px;font-size:14px;line-height:16px;color:#404040;transform:scaleX(0.9442);">Set up locally</span>
<div class="b btn" style="left:442px;top:653px;width:151px;height:30px;"></div>
<span class="t" style="left:456.57px;top:659.85px;font-size:14px;line-height:16px;color:#404040;transform:scaleX(0.9670);">Activate offline POS</span>
<div class="b btn" style="left:601px;top:653px;width:104px;height:30px;"></div>
<span class="t" style="left:635.73px;top:659.85px;font-size:14px;line-height:16px;color:#404040;transform:scaleX(0.9485);">Copy</span>
<div class="b btn" style="left:882px;top:653px;width:104px;height:30px;"></div>
<span class="t" style="left:918.09px;top:659.85px;font-size:14px;line-height:16px;color:#b8b8b8;transform:scaleX(0.9657);">Save</span>
<div class="b btn" style="left:993px;top:653px;width:103px;height:30px;"></div>
<span class="t" style="left:1022.26px;top:659.85px;font-size:14px;line-height:16px;color:#404040;transform:scaleX(0.9949);">Delete</span>
<div class="b btn" style="left:1102px;top:653px;width:104px;height:30px;"></div>
<span class="t" style="left:1136.94px;top:659.85px;font-size:14px;line-height:16px;color:#404040;transform:scaleX(0.9286);">Close</span>
</body></html>
